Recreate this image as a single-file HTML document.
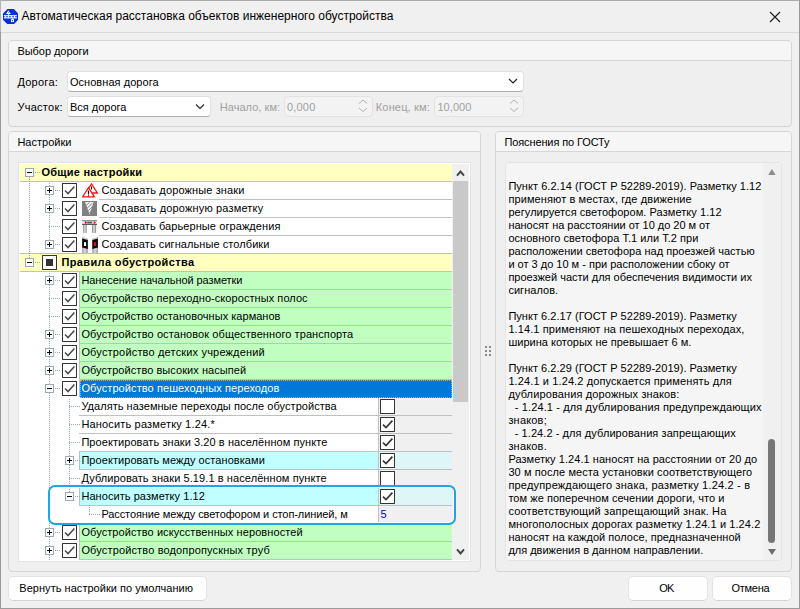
<!DOCTYPE html>
<html lang="ru"><head><meta charset="utf-8"><title>Автоматическая расстановка объектов инженерного обустройства</title>
<style>
*{box-sizing:border-box;margin:0;padding:0}
html,body{width:800px;height:609px;overflow:hidden;background:#f0f0f0}
body{position:relative;font-family:"Liberation Sans",sans-serif;font-size:11px;color:#000;line-height:13px}
.a{position:absolute}
.t{position:absolute;white-space:pre;line-height:13px;height:13px}
.grp{position:absolute;border:1px solid #d6d6d6;border-radius:4px;background:#efefef;overflow:hidden}
.grp .hd{position:absolute;left:0;top:0;right:0;height:20px;background:#f6f6f6;border-bottom:1px solid #d6d6d6}
.combo{position:absolute;background:#fff;border:1px solid #e0e0e0;border-bottom-color:#b0b0b0;border-radius:4px}
.spin{position:absolute;background:#f3f3f3;border:1px solid #e2e2e2;border-radius:4px}
.btn{position:absolute;background:#fefefe;border:1px solid #e2e2e2;border-bottom-color:#d4d4d4;border-radius:5px}
.dis{color:#a0a0a0}
.row{position:absolute;height:17px}
.sep{position:absolute;height:1px;background:#c0c0c0}
.cb{position:absolute;width:15px;height:15px;background:#fff;border:1px solid #333;border-radius:0.5px}
.cb svg{position:absolute;left:-1px;top:-1px}
.ex{position:absolute;width:9px;height:9px;background:#fff;border:1px solid #9aaab5}
.ex i{position:absolute;left:1px;top:3px;width:5px;height:1px;background:#000}
.ex b{position:absolute;left:3px;top:1px;width:1px;height:5px;background:#000}
.hd1{position:absolute;height:1px;background-image:linear-gradient(90deg,#93a9b3 50%,transparent 50%);background-size:2px 1px}
.vd1{position:absolute;width:1px;background-image:linear-gradient(180deg,#93a9b3 50%,transparent 50%);background-size:1px 2px}
.bold{font-weight:bold}
.ttl{font-size:12px;line-height:15px;height:15px}
</style></head><body>

<div class="a" style="left:0;top:0;width:800px;height:1px;background:#ababab"></div>
<div class="a" style="left:0;top:0;width:1px;height:32px;background:#b4b4b4"></div>
<div class="a" style="left:0;top:32px;width:1px;height:577px;background:#999"></div>
<div class="a" style="left:799px;top:0;width:1px;height:609px;background:#999"></div>
<div class="a" style="left:0;top:608px;width:800px;height:1px;background:#9b9b9b"></div>
<div class="a" style="left:1px;top:32px;width:798px;height:1px;background:#d9d9d9"></div>
<svg class="a" style="left:3px;top:8.8px" width="15.3" height="15.3" viewBox="0 0 15.3 15.3">
<polygon points="4.5,0 10.8,0 15.3,4.5 15.3,10.8 10.8,15.3 4.5,15.3 0,10.8 0,4.5" fill="#0431dc"/>
<g fill="#fff"><path d="M5.4 1.2L7.8 4.9H3Z"/><rect x="5.2" y="4.9" width="1" height="1.4"/>
<rect x="0.9" y="6.15" width="13" height="1.15"/><rect x="0.9" y="8.25" width="13" height="1.15"/>
<rect x="1.9" y="7" width="0.9" height="1.6"/><rect x="5.1" y="7" width="0.9" height="1.6"/><rect x="8.1" y="7" width="0.9" height="1.6"/><rect x="11.1" y="7" width="0.9" height="1.6"/>
<rect x="8.9" y="9.2" width="0.9" height="1.2"/><rect x="8" y="10.2" width="3" height="2.9"/></g>
<circle cx="5.4" cy="3.7" r="0.5" fill="#0431dc"/><circle cx="9.5" cy="11.65" r="0.6" fill="#0431dc"/></svg>
<div class="t ttl" style="left:21.4px;top:9px;letter-spacing:0.009px">Автоматическая расстановка объектов инженерного обустройства</div>
<svg class="a" style="left:768px;top:10px" width="14" height="14" viewBox="0 0 14 14"><path d="M2 2L12 12M12 2L2 12" stroke="#1a1a1a" stroke-width="1.1" fill="none"/></svg>
<div class="grp" style="left:8px;top:40px;width:784px;height:87px"><div class="hd"></div></div>
<div class="t" style="left:17.4px;top:45px;letter-spacing:-0.039px">Выбор дороги</div>
<div class="t" style="left:17.4px;top:76px;letter-spacing:0.261px">Дорога:</div>
<div class="combo" style="left:67px;top:71px;width:457px;height:21px"></div>
<div class="t" style="left:69.9px;top:76px;letter-spacing:0.055px">Основная дорога</div>
<svg class="a" style="left:507px;top:76px" width="12" height="10" viewBox="0 0 12 10"><path d="M2 3L6 7L10 3" stroke="#222" stroke-width="1.15" fill="none"/></svg>
<div class="t" style="left:17.4px;top:101px;letter-spacing:0.281px">Участок:</div>
<div class="combo" style="left:67px;top:96px;width:144px;height:21px"></div>
<div class="t" style="left:69.9px;top:101px;letter-spacing:0.008px">Вся дорога</div>
<svg class="a" style="left:194px;top:101px" width="12" height="10" viewBox="0 0 12 10"><path d="M2 3.5L6 7.5L10 3.5" stroke="#222" stroke-width="1.15" fill="none"/></svg>
<div class="t dis" style="left:219.8px;top:101px;letter-spacing:0.039px">Начало, км:</div>
<div class="spin" style="left:284px;top:96px;width:89px;height:21px"></div>
<div class="t dis" style="left:287.0px;top:101px;letter-spacing:0.194px">0,000</div>
<svg class="a" style="left:357px;top:98px" width="12" height="16" viewBox="0 0 12 16"><path d="M2 5.5L6 2L10 5.5M2 10L6 13.5L10 10" stroke="#b0b0b0" stroke-width="1" fill="none"/></svg>
<div class="t dis" style="left:375.8px;top:101px;letter-spacing:0.154px">Конец, км:</div>
<div class="spin" style="left:434px;top:96px;width:90px;height:21px"></div>
<div class="t dis" style="left:437.4px;top:101px;letter-spacing:0.074px">10,000</div>
<svg class="a" style="left:508px;top:98px" width="12" height="16" viewBox="0 0 12 16"><path d="M2 5.5L6 2L10 5.5M2 10L6 13.5L10 10" stroke="#b0b0b0" stroke-width="1" fill="none"/></svg>
<div class="grp" style="left:8px;top:131px;width:473px;height:441px"><div class="hd"></div></div>
<div class="t" style="left:17.4px;top:136px;letter-spacing:0.018px">Настройки</div>
<div class="grp" style="left:495px;top:131px;width:297px;height:441px"><div class="hd"></div></div>
<div class="t" style="left:504.4px;top:136px;letter-spacing:-0.113px">Пояснения по ГОСТу</div>
<div class="a" style="left:485px;top:346px;width:2px;height:2px;background:#8a8a8a"></div>
<div class="a" style="left:485px;top:350px;width:2px;height:2px;background:#8a8a8a"></div>
<div class="a" style="left:485px;top:354px;width:2px;height:2px;background:#8a8a8a"></div>
<div class="a" style="left:489px;top:346px;width:2px;height:2px;background:#8a8a8a"></div>
<div class="a" style="left:489px;top:350px;width:2px;height:2px;background:#8a8a8a"></div>
<div class="a" style="left:489px;top:354px;width:2px;height:2px;background:#8a8a8a"></div>
<div class="a" style="left:18px;top:162px;width:453px;height:400px;background:#fff;border:1px solid #e3e3e3"></div>
<div class="a" style="left:452px;top:164px;width:17px;height:396px;background:#f0f0f0"></div>
<div class="a" style="left:453px;top:181px;width:15px;height:221px;background:#c9c9c9"></div>
<svg class="a" style="left:454px;top:167px" width="13" height="12" viewBox="0 0 13 12"><path d="M3 8.6L6.5 4.6L10 8.6" stroke="#444" stroke-width="2" fill="none"/></svg>
<svg class="a" style="left:454px;top:546px" width="13" height="12" viewBox="0 0 13 12"><path d="M3 3.4L6.5 7.4L10 3.4" stroke="#444" stroke-width="2" fill="none"/></svg>
<div class="row" style="left:20px;top:164px;width:432px;background:#ffffc0"></div>
<div class="sep" style="left:20px;top:181px;width:432px"></div>
<div class="hd1" style="left:35px;top:172px;width:5px"></div>
<div class="ex" style="left:25px;top:168px"><i></i></div>
<div class="t bold" style="left:41.4px;top:166px;letter-spacing:0.246px">Общие настройки</div>
<svg class="a" style="left:82px;top:183px" width="17" height="16" viewBox="0 0 17 16"><path d="M9.5 0.9L15.4 10H3.6Z" fill="#fff" stroke="#ff1010" stroke-width="1.3"/><path d="M9.5 3.4V6.4" stroke="#111" stroke-width="1.1"/><path d="M6.5 4.6L12.4 13.9H0.6Z" fill="#fff" stroke="#ff1010" stroke-width="1.3"/><path d="M6.5 7.5V11.6M6.5 12.3V13.2" stroke="#111" stroke-width="1.2"/></svg>
<div class="sep" style="left:99px;top:199px;width:353px"></div>
<div class="hd1" style="left:55px;top:190px;width:5px"></div>
<div class="ex" style="left:45px;top:186px"><i></i><b></b></div>
<div class="cb" style="left:62px;top:183px"><svg width="15" height="15" viewBox="0 0 15 15"><path d="M3 7.6L6 10.6L12.4 3.6" stroke="#4a4a4a" stroke-width="1.45" fill="none"/></svg></div>
<div class="t" style="left:101.4px;top:184px;letter-spacing:0.127px">Создавать дорожные знаки</div>
<svg class="a" style="left:82px;top:201px" width="16" height="16" viewBox="0 0 16 16"><rect x="0" y="0" width="15" height="15" fill="#808080"/><path d="M3.2 0.9H11.6L7.6 13.4Z" fill="#f4f4f4"/><path d="M4.2 4.6L7.6 1.2M5 7.4L10.6 1.8M6 10L11 5M6.8 12.4L9.8 9.4" stroke="#808080" stroke-width="0.9"/></svg>
<div class="sep" style="left:99px;top:217px;width:353px"></div>
<div class="hd1" style="left:55px;top:208px;width:5px"></div>
<div class="ex" style="left:45px;top:204px"><i></i><b></b></div>
<div class="cb" style="left:62px;top:201px"><svg width="15" height="15" viewBox="0 0 15 15"><path d="M3 7.6L6 10.6L12.4 3.6" stroke="#4a4a4a" stroke-width="1.45" fill="none"/></svg></div>
<div class="t" style="left:101.4px;top:202px;letter-spacing:0.162px">Создавать дорожную разметку</div>
<svg class="a" style="left:82px;top:219px" width="16" height="16" viewBox="0 0 16 16"><rect x="1.1" y="5.5" width="3.7" height="8.4" fill="#9c9c9c"/><rect x="2.1" y="5.5" width="1.5" height="8.4" fill="#d6d6d6"/><rect x="10" y="5.5" width="4.1" height="8.4" fill="#9c9c9c"/><rect x="11.2" y="5.5" width="1.6" height="8.4" fill="#d6d6d6"/><rect x="0" y="1.4" width="15" height="4.3" fill="#f2f2f2"/><rect x="0" y="1.3" width="15" height="0.9" fill="#666"/><rect x="0" y="4.8" width="15" height="1" fill="#333"/><rect x="5.2" y="2.7" width="5" height="1.7" fill="#555"/><path d="M3 2.1L5.3 3.55L3 5ZM11.8 2.1L14.1 3.55L11.8 5Z" fill="#f00"/></svg>
<div class="sep" style="left:99px;top:235px;width:353px"></div>
<div class="hd1" style="left:49px;top:226px;width:11px"></div>
<div class="cb" style="left:62px;top:219px"><svg width="15" height="15" viewBox="0 0 15 15"><path d="M3 7.6L6 10.6L12.4 3.6" stroke="#4a4a4a" stroke-width="1.45" fill="none"/></svg></div>
<div class="t" style="left:101.4px;top:220px;letter-spacing:0.085px">Создавать барьерные ограждения</div>
<svg class="a" style="left:82px;top:237px" width="16" height="16" viewBox="0 0 16 16"><path d="M0.2 0L5.8 1.8V16H0.2Z" fill="#a0a0a0"/><rect x="1.4" y="11" width="3" height="5" fill="#d2d2d2"/><path d="M0.6 0.3L5.4 1.9V3H0.6Z" fill="#d8d8d8"/><path d="M0.2 1.4L5.8 3V12L0.2 10.6Z" fill="#0a0a0a"/><rect x="2" y="5.2" width="2.1" height="3.8" fill="#fff"/><path d="M15.9 0L10.3 1.8V16H15.9Z" fill="#a0a0a0"/><rect x="11.6" y="11" width="3" height="5" fill="#d2d2d2"/><path d="M15.5 0.3L10.7 1.9V3H15.5Z" fill="#d8d8d8"/><path d="M15.9 1.4L10.3 3V12L15.9 10.6Z" fill="#0a0a0a"/><rect x="12" y="5.2" width="2.1" height="3.8" fill="#f00"/></svg>
<div class="sep" style="left:20px;top:253px;width:432px"></div>
<div class="hd1" style="left:55px;top:244px;width:5px"></div>
<div class="ex" style="left:45px;top:240px"><i></i><b></b></div>
<div class="cb" style="left:62px;top:237px"><svg width="15" height="15" viewBox="0 0 15 15"><path d="M3 7.6L6 10.6L12.4 3.6" stroke="#4a4a4a" stroke-width="1.45" fill="none"/></svg></div>
<div class="t" style="left:101.4px;top:238px;letter-spacing:0.073px">Создавать сигнальные столбики</div>
<div class="row" style="left:20px;top:254px;width:432px;background:#ffffc0"></div>
<div class="sep" style="left:20px;top:271px;width:432px"></div>
<div class="hd1" style="left:35px;top:262px;width:5px"></div>
<div class="ex" style="left:25px;top:258px"><i></i></div>
<div class="cb" style="left:42px;top:255px"><svg width="15" height="15" viewBox="0 0 15 15"><rect x="4" y="4" width="7" height="7" fill="#333"/></svg></div>
<div class="t bold" style="left:61.4px;top:256px;letter-spacing:0.375px">Правила обустройства</div>
<div class="row" style="left:80px;top:272px;width:372px;background:#c0ffc0"></div>
<div class="sep" style="left:79px;top:289px;width:373px"></div>
<div class="a" style="left:79px;top:272px;width:1px;height:17px;background:#c0c0c0"></div>
<div class="hd1" style="left:55px;top:280px;width:5px"></div>
<div class="ex" style="left:45px;top:276px"><i></i><b></b></div>
<div class="cb" style="left:62px;top:273px"><svg width="15" height="15" viewBox="0 0 15 15"><path d="M3 7.6L6 10.6L12.4 3.6" stroke="#4a4a4a" stroke-width="1.45" fill="none"/></svg></div>
<div class="t" style="left:81.4px;top:274px;letter-spacing:-0.074px">Нанесение начальной разметки</div>
<div class="row" style="left:80px;top:290px;width:372px;background:#c0ffc0"></div>
<div class="sep" style="left:79px;top:307px;width:373px"></div>
<div class="a" style="left:79px;top:290px;width:1px;height:17px;background:#c0c0c0"></div>
<div class="hd1" style="left:49px;top:298px;width:11px"></div>
<div class="cb" style="left:62px;top:291px"><svg width="15" height="15" viewBox="0 0 15 15"><path d="M3 7.6L6 10.6L12.4 3.6" stroke="#4a4a4a" stroke-width="1.45" fill="none"/></svg></div>
<div class="t" style="left:81.4px;top:292px;letter-spacing:0.064px">Обустройство переходно-скоростных полос</div>
<div class="row" style="left:80px;top:308px;width:372px;background:#c0ffc0"></div>
<div class="sep" style="left:79px;top:325px;width:373px"></div>
<div class="a" style="left:79px;top:308px;width:1px;height:17px;background:#c0c0c0"></div>
<div class="hd1" style="left:49px;top:316px;width:11px"></div>
<div class="cb" style="left:62px;top:309px"><svg width="15" height="15" viewBox="0 0 15 15"><path d="M3 7.6L6 10.6L12.4 3.6" stroke="#4a4a4a" stroke-width="1.45" fill="none"/></svg></div>
<div class="t" style="left:81.4px;top:310px;letter-spacing:0.031px">Обустройство остановочных карманов</div>
<div class="row" style="left:80px;top:326px;width:372px;background:#c0ffc0"></div>
<div class="sep" style="left:79px;top:343px;width:373px"></div>
<div class="a" style="left:79px;top:326px;width:1px;height:17px;background:#c0c0c0"></div>
<div class="hd1" style="left:55px;top:334px;width:5px"></div>
<div class="ex" style="left:45px;top:330px"><i></i><b></b></div>
<div class="cb" style="left:62px;top:327px"><svg width="15" height="15" viewBox="0 0 15 15"><path d="M3 7.6L6 10.6L12.4 3.6" stroke="#4a4a4a" stroke-width="1.45" fill="none"/></svg></div>
<div class="t" style="left:81.4px;top:328px;letter-spacing:0.088px">Обустройство остановок общественного транспорта</div>
<div class="row" style="left:80px;top:344px;width:372px;background:#c0ffc0"></div>
<div class="sep" style="left:79px;top:361px;width:373px"></div>
<div class="a" style="left:79px;top:344px;width:1px;height:17px;background:#c0c0c0"></div>
<div class="hd1" style="left:55px;top:352px;width:5px"></div>
<div class="ex" style="left:45px;top:348px"><i></i><b></b></div>
<div class="cb" style="left:62px;top:345px"><svg width="15" height="15" viewBox="0 0 15 15"><path d="M3 7.6L6 10.6L12.4 3.6" stroke="#4a4a4a" stroke-width="1.45" fill="none"/></svg></div>
<div class="t" style="left:81.4px;top:346px;letter-spacing:0.176px">Обустройство детских учреждений</div>
<div class="row" style="left:80px;top:362px;width:372px;background:#c0ffc0"></div>
<div class="sep" style="left:79px;top:379px;width:373px"></div>
<div class="a" style="left:79px;top:362px;width:1px;height:17px;background:#c0c0c0"></div>
<div class="hd1" style="left:55px;top:370px;width:5px"></div>
<div class="ex" style="left:45px;top:366px"><i></i><b></b></div>
<div class="cb" style="left:62px;top:363px"><svg width="15" height="15" viewBox="0 0 15 15"><path d="M3 7.6L6 10.6L12.4 3.6" stroke="#4a4a4a" stroke-width="1.45" fill="none"/></svg></div>
<div class="t" style="left:81.4px;top:364px;letter-spacing:0.055px">Обустройство высоких насыпей</div>
<div class="a" style="left:80px;top:380px;width:372px;height:18px;background:#0078d7;outline:1px dotted #f0a040;outline-offset:-1px"></div>
<div class="a" style="left:79px;top:380px;width:1px;height:17px;background:#c0c0c0"></div>
<div class="hd1" style="left:55px;top:388px;width:5px"></div>
<div class="ex" style="left:45px;top:384px"><i></i></div>
<div class="cb" style="left:62px;top:381px"><svg width="15" height="15" viewBox="0 0 15 15"><path d="M3 7.6L6 10.6L12.4 3.6" stroke="#4a4a4a" stroke-width="1.45" fill="none"/></svg></div>
<div class="t" style="left:81.4px;top:382px;letter-spacing:0.093px;color:#fff">Обустройство пешеходных переходов</div>
<div class="row" style="left:379px;top:398px;width:73px;background:#f0f0f0"></div>
<div class="a" style="left:378px;top:398px;width:1px;height:18px;background:#c0c0c0"></div>
<div class="sep" style="left:79px;top:415px;width:373px"></div>
<div class="hd1" style="left:69px;top:406px;width:12px"></div>
<div class="t" style="left:81.4px;top:400px;letter-spacing:0.043px">Удалять наземные переходы после обустройства</div>
<div class="cb" style="left:380px;top:399px"></div>
<div class="row" style="left:379px;top:416px;width:73px;background:#f0f0f0"></div>
<div class="a" style="left:378px;top:416px;width:1px;height:18px;background:#c0c0c0"></div>
<div class="sep" style="left:79px;top:433px;width:373px"></div>
<div class="hd1" style="left:69px;top:424px;width:12px"></div>
<div class="t" style="left:81.4px;top:418px;letter-spacing:0.167px">Наносить разметку 1.24.*</div>
<div class="cb" style="left:380px;top:417px"><svg width="15" height="15" viewBox="0 0 15 15"><path d="M3 7.6L6 10.6L12.4 3.6" stroke="#333" stroke-width="1.6" fill="none"/></svg></div>
<div class="row" style="left:379px;top:434px;width:73px;background:#f0f0f0"></div>
<div class="a" style="left:378px;top:434px;width:1px;height:18px;background:#c0c0c0"></div>
<div class="sep" style="left:79px;top:451px;width:373px"></div>
<div class="hd1" style="left:69px;top:442px;width:12px"></div>
<div class="t" style="left:81.4px;top:436px;letter-spacing:0.068px">Проектировать знаки 3.20 в населённом пункте</div>
<div class="cb" style="left:380px;top:435px"><svg width="15" height="15" viewBox="0 0 15 15"><path d="M3 7.6L6 10.6L12.4 3.6" stroke="#333" stroke-width="1.6" fill="none"/></svg></div>
<div class="row" style="left:80px;top:452px;width:298px;background:#c0ffff"></div>
<div class="row" style="left:379px;top:452px;width:73px;background:#dff6f6"></div>
<div class="a" style="left:378px;top:452px;width:1px;height:18px;background:#c0c0c0"></div>
<div class="sep" style="left:79px;top:469px;width:373px"></div>
<div class="a" style="left:79px;top:452px;width:1px;height:17px;background:#c0c0c0"></div>
<div class="hd1" style="left:75px;top:460px;width:6px"></div>
<div class="ex" style="left:65px;top:456px"><i></i><b></b></div>
<div class="t" style="left:81.4px;top:454px;letter-spacing:0.065px">Проектировать между остановками</div>
<div class="cb" style="left:380px;top:453px"><svg width="15" height="15" viewBox="0 0 15 15"><path d="M3 7.6L6 10.6L12.4 3.6" stroke="#333" stroke-width="1.6" fill="none"/></svg></div>
<div class="row" style="left:379px;top:470px;width:73px;background:#f0f0f0"></div>
<div class="a" style="left:378px;top:470px;width:1px;height:18px;background:#c0c0c0"></div>
<div class="sep" style="left:79px;top:487px;width:373px"></div>
<div class="hd1" style="left:69px;top:478px;width:12px"></div>
<div class="t" style="left:81.4px;top:472px;letter-spacing:0.086px">Дублировать знаки 5.19.1 в населённом пункте</div>
<div class="cb" style="left:380px;top:471px"></div>
<div class="row" style="left:80px;top:488px;width:298px;background:#c0ffff"></div>
<div class="row" style="left:379px;top:488px;width:73px;background:#dff6f6"></div>
<div class="a" style="left:378px;top:488px;width:1px;height:18px;background:#c0c0c0"></div>
<div class="sep" style="left:79px;top:505px;width:373px"></div>
<div class="a" style="left:79px;top:488px;width:1px;height:17px;background:#c0c0c0"></div>
<div class="hd1" style="left:75px;top:496px;width:6px"></div>
<div class="ex" style="left:65px;top:492px"><i></i></div>
<div class="t" style="left:81.4px;top:490px;letter-spacing:0.062px">Наносить разметку 1.12</div>
<div class="cb" style="left:380px;top:489px"><svg width="15" height="15" viewBox="0 0 15 15"><path d="M3 7.6L6 10.6L12.4 3.6" stroke="#333" stroke-width="1.6" fill="none"/></svg></div>
<div class="row" style="left:379px;top:506px;width:73px;background:#f0f0f0"></div>
<div class="a" style="left:378px;top:506px;width:1px;height:18px;background:#c0c0c0"></div>
<div class="sep" style="left:79px;top:523px;width:373px"></div>
<div class="hd1" style="left:89px;top:514px;width:11px"></div>
<div class="t" style="left:101.4px;top:508px;letter-spacing:-0.095px">Расстояние между светофором и стоп-линией, м</div>
<div class="t" style="left:380.6px;top:508px;color:#0000f0">5</div>
<div class="row" style="left:80px;top:524px;width:372px;background:#c0ffc0"></div>
<div class="sep" style="left:79px;top:541px;width:373px"></div>
<div class="a" style="left:79px;top:524px;width:1px;height:17px;background:#c0c0c0"></div>
<div class="hd1" style="left:55px;top:532px;width:5px"></div>
<div class="ex" style="left:45px;top:528px"><i></i><b></b></div>
<div class="cb" style="left:62px;top:525px"><svg width="15" height="15" viewBox="0 0 15 15"><path d="M3 7.6L6 10.6L12.4 3.6" stroke="#4a4a4a" stroke-width="1.45" fill="none"/></svg></div>
<div class="t" style="left:81.4px;top:526px;letter-spacing:0.088px">Обустройство искусственных неровностей</div>
<div class="row" style="left:80px;top:542px;width:372px;background:#c0ffc0"></div>
<div class="sep" style="left:79px;top:559px;width:373px"></div>
<div class="a" style="left:79px;top:542px;width:1px;height:17px;background:#c0c0c0"></div>
<div class="hd1" style="left:55px;top:550px;width:5px"></div>
<div class="ex" style="left:45px;top:546px"><i></i><b></b></div>
<div class="cb" style="left:62px;top:543px"><svg width="15" height="15" viewBox="0 0 15 15"><path d="M3 7.6L6 10.6L12.4 3.6" stroke="#4a4a4a" stroke-width="1.45" fill="none"/></svg></div>
<div class="t" style="left:81.4px;top:544px;letter-spacing:0.146px">Обустройство водопропускных труб</div>
<div class="vd1" style="left:29px;top:177px;height:81px"></div>
<div class="vd1" style="left:49px;top:183px;height:3px"></div>
<div class="vd1" style="left:49px;top:195px;height:9px"></div>
<div class="vd1" style="left:49px;top:213px;height:27px"></div>
<div class="vd1" style="left:49px;top:273px;height:3px"></div>
<div class="vd1" style="left:49px;top:285px;height:45px"></div>
<div class="vd1" style="left:49px;top:339px;height:9px"></div>
<div class="vd1" style="left:49px;top:357px;height:9px"></div>
<div class="vd1" style="left:49px;top:375px;height:9px"></div>
<div class="vd1" style="left:49px;top:393px;height:135px"></div>
<div class="vd1" style="left:49px;top:537px;height:9px"></div>
<div class="vd1" style="left:49px;top:555px;height:5px"></div>
<div class="vd1" style="left:69px;top:399px;height:57px"></div>
<div class="vd1" style="left:69px;top:465px;height:20px"></div>
<div class="vd1" style="left:69px;top:489px;height:3px"></div>
<div class="vd1" style="left:89px;top:505px;height:10px"></div>
<div class="a" style="left:48px;top:485px;width:408px;height:40px;border:2px solid #1fa4e6;border-radius:7px;box-shadow:inset 0 0 0 1px #fff"></div>
<div class="a" style="left:505px;top:162px;width:277px;height:399px;background:#f5f5f5;border:1px solid #e4e4e4;border-radius:3px"></div>
<div class="a" style="left:763px;top:163px;width:18px;height:397px;background:#f0f0f0"></div>
<svg class="a" style="left:767px;top:168px" width="10" height="8" viewBox="0 0 10 8"><path d="M1.2 7L4.9 1L8.6 7Z" fill="#8a8a8a"/></svg>
<svg class="a" style="left:767px;top:548px" width="10" height="8" viewBox="0 0 10 8"><path d="M1 1L5 7L9 1Z" fill="#6e6e6e"/></svg>
<div class="a" style="left:768px;top:439px;width:7px;height:104px;background:#767676;border-radius:3.5px"></div>
<div class="t" style="left:508.4px;top:180px;letter-spacing:0.038px">Пункт 6.2.14 (ГОСТ Р 52289-2019). Разметку 1.12</div>
<div class="t" style="left:508.4px;top:193px;letter-spacing:0.103px">применяют в местах, где движение</div>
<div class="t" style="left:508.4px;top:206px;letter-spacing:0.059px">регулируется светофором. Разметку 1.12</div>
<div class="t" style="left:508.4px;top:219px;letter-spacing:-0.024px">наносят на расстоянии от 10 до 20 м от</div>
<div class="t" style="left:508.4px;top:232px;letter-spacing:0.037px">основного светофора Т.1 или Т.2 при</div>
<div class="t" style="left:508.4px;top:245px;letter-spacing:0.024px">расположении светофора над проезжей частью</div>
<div class="t" style="left:508.4px;top:258px">и от 3 до 10 м - при расположении сбоку от</div>
<div class="t" style="left:508.4px;top:271px">проезжей части для обеспечения видимости их</div>
<div class="t" style="left:508.4px;top:284px;letter-spacing:0.042px">сигналов.</div>
<div class="t" style="left:508.4px;top:310px;letter-spacing:0.037px">Пункт 6.2.17 (ГОСТ Р 52289-2019). Разметку</div>
<div class="t" style="left:508.4px;top:323px;letter-spacing:0.092px">1.14.1 применяют на пешеходных переходах,</div>
<div class="t" style="left:508.4px;top:336px;letter-spacing:0.010px">ширина которых не превышает 6 м.</div>
<div class="t" style="left:508.4px;top:362px;letter-spacing:0.037px">Пункт 6.2.29 (ГОСТ Р 52289-2019). Разметку</div>
<div class="t" style="left:508.4px;top:375px;letter-spacing:0.113px">1.24.1 и 1.24.2 допускается применять для</div>
<div class="t" style="left:508.4px;top:388px;letter-spacing:0.126px">дублирования дорожных знаков:</div>
<div class="t" style="left:508.4px;top:401px;letter-spacing:0.128px">  - 1.24.1 - для дублирования предупреждающих</div>
<div class="t" style="left:508.4px;top:414px;letter-spacing:0.185px">знаков;</div>
<div class="t" style="left:508.4px;top:427px;letter-spacing:0.080px">  - 1.24.2 - для дублирования запрещающих</div>
<div class="t" style="left:508.4px;top:440px;letter-spacing:0.185px">знаков.</div>
<div class="t" style="left:508.4px;top:453px;letter-spacing:0.058px">Разметку 1.24.1 наносят на расстоянии от 20 до</div>
<div class="t" style="left:508.4px;top:466px;letter-spacing:0.087px">30 м после места установки соответствующего</div>
<div class="t" style="left:508.4px;top:479px;letter-spacing:0.186px">предупреждающего знака, разметку 1.24.2 - в</div>
<div class="t" style="left:508.4px;top:492px;letter-spacing:0.047px">том же поперечном сечении дороги, что и</div>
<div class="t" style="left:508.4px;top:505px;letter-spacing:0.149px">соответствующий запрещающий знак. На</div>
<div class="t" style="left:508.4px;top:518px;letter-spacing:0.091px">многополосных дорогах разметку 1.24.1 и 1.24.2</div>
<div class="t" style="left:508.4px;top:531px;letter-spacing:0.025px">наносят на каждой полосе, предназначенной</div>
<div class="t" style="left:508.4px;top:544px;letter-spacing:-0.012px">для движения в данном направлении.</div>
<div class="btn" style="left:8px;top:576px;width:199px;height:25px"></div>
<div class="t" style="left:19.3px;top:582px;letter-spacing:0.038px">Вернуть настройки по умолчанию</div>
<div class="btn" style="left:628px;top:576px;width:80px;height:25px"></div>
<div class="t" style="left:659.2px;top:582px;letter-spacing:-0.7px">OK</div>
<div class="btn" style="left:712px;top:576px;width:80px;height:25px"></div>
<div class="t" style="left:731.4px;top:582px;letter-spacing:-0.25px">Отмена</div>
</body></html>
